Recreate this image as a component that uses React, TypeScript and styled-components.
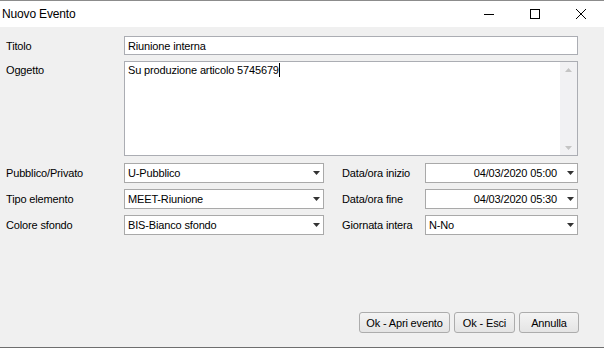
import React from 'react';
import styled, { createGlobalStyle } from 'styled-components';

const Global = createGlobalStyle`
  html, body { margin: 0; padding: 0; background: #f0f0f0; }
  body { font-family: "Liberation Sans", Arial, sans-serif; }
  * { box-sizing: border-box; }
`;

const Window = styled.div`
  width: 604px;
  height: 348px;
  border-top: 1px solid #8c8c8c;
  border-bottom: 1px solid #6e6e6e;
  display: flex;
  flex-direction: column;
  background: #f0f0f0;
`;

const TitleBar = styled.div`
  height: 26px;
  background: #ffffff;
  display: flex;
  align-items: center;
`;

const Title = styled.div`
  flex: 1;
  padding-left: 2px;
  font-size: 12px;
  letter-spacing: -0.15px;
  color: #000;
`;

const CaptionButton = styled.div`
  width: 46px;
  height: 26px;
  display: flex;
  align-items: center;
  justify-content: center;
`;

const Content = styled.div`
  flex: 1;
  display: flex;
  flex-direction: column;
  padding: 9px 26px 14px 6px;
  font-size: 11px;
  letter-spacing: -0.15px;
  color: #000;
`;

const Row = styled.div<{ $h: number; $top?: boolean }>`
  display: grid;
  grid-template-columns: 118px 1fr;
  height: ${(p) => p.$h}px;
  align-items: ${(p) => (p.$top ? 'start' : 'center')};
  margin-bottom: 6px;
`;

const Label = styled.div<{ $pad?: number }>`
  line-height: 14px;
  padding-top: ${(p) => p.$pad ?? 0}px;
  white-space: nowrap;
`;

const TextInput = styled.div`
  height: 19px;
  border: 1px solid #abadb3;
  background: #fff;
  padding-left: 3px;
  display: flex;
  align-items: center;
  line-height: 14px;
`;

const TextArea = styled.div`
  height: 95px;
  border: 1px solid #abadb3;
  background: #fff;
  display: flex;
`;

const TextPane = styled.div`
  flex: 1;
  padding: 1px 3px;
  line-height: 14px;
`;

const Caret = styled.span`
  display: inline-block;
  width: 1px;
  height: 14px;
  background: #000;
  vertical-align: top;
`;

const ScrollTrack = styled.div`
  width: 17px;
  background: #f1f1f3;
  display: flex;
  flex-direction: column;
  justify-content: space-between;
  align-items: center;
  padding: 6px 0 5px;
`;

const Grid = styled.div`
  display: grid;
  grid-template-columns: 118px 200px 101px 1fr;
  grid-auto-rows: 20px;
  row-gap: 6px;
  align-items: center;
  margin-top: 1px;
`;

const RightLabel = styled(Label)`
  padding-left: 18px;
`;

const Combo = styled.div`
  height: 20px;
  border: 1px solid #a9a9a9;
  background: #fff;
  display: flex;
  align-items: center;
  padding-left: 3px;
`;

const ComboValue = styled.div<{ $right?: boolean }>`
  flex: 1;
  line-height: 14px;
  text-align: ${(p) => (p.$right ? 'right' : 'left')};
  padding-right: 6px;
  white-space: nowrap;
`;

const ArrowBox = styled.div`
  width: 14px;
  display: flex;
  justify-content: center;
  align-items: center;
`;

const Spacer = styled.div`
  flex: 1;
`;

const ButtonBar = styled.div`
  display: flex;
  justify-content: flex-end;
  gap: 4px;
  margin-right: -1px;
`;

const Button = styled.div<{ $w: number }>`
  width: ${(p) => p.$w}px;
  height: 21px;
  border: 1px solid #acacac;
  border-radius: 3px;
  background: linear-gradient(#f4f4f4, #e4e4e4);
  display: flex;
  align-items: center;
  justify-content: center;
  font-size: 11px;
  white-space: nowrap;
`;

const Triangle = ({ color = '#333333', up = false }: { color?: string; up?: boolean }) => (
  <svg width="7" height="4" viewBox="0 0 7 4">
    <polygon points={up ? '0,4 7,4 3.5,0' : '0,0 7,0 3.5,4'} fill={color} />
  </svg>
);

const ComboBox = ({ value, right }: { value: string; right?: boolean }) => (
  <Combo>
    <ComboValue $right={right}>{value}</ComboValue>
    <ArrowBox>
      <Triangle />
    </ArrowBox>
  </Combo>
);

export default function App() {
  return (
    <>
      <Global />
      <Window>
        <TitleBar>
          <Title>Nuovo Evento</Title>
          <CaptionButton>
            <svg width="10" height="10" viewBox="0 0 10 10">
              <line x1="0" y1="5.5" x2="10" y2="5.5" stroke="#000" strokeWidth="1" />
            </svg>
          </CaptionButton>
          <CaptionButton>
            <svg width="10" height="10" viewBox="0 0 10 10">
              <rect x="0.5" y="0.5" width="9" height="9" fill="none" stroke="#000" strokeWidth="1" />
            </svg>
          </CaptionButton>
          <CaptionButton>
            <svg width="10" height="10" viewBox="0 0 10 10">
              <line x1="0" y1="0" x2="10" y2="10" stroke="#000" strokeWidth="1" />
              <line x1="10" y1="0" x2="0" y2="10" stroke="#000" strokeWidth="1" />
            </svg>
          </CaptionButton>
        </TitleBar>
        <Content>
          <Row $h={19}>
            <Label>Titolo</Label>
            <TextInput>Riunione interna</TextInput>
          </Row>
          <Row $h={95} $top>
            <Label $pad={2}>Oggetto</Label>
            <TextArea>
              <TextPane>
                Su produzione articolo 5745679
                <Caret />
              </TextPane>
              <ScrollTrack>
                <Triangle color="#c4c4c4" up />
                <Triangle color="#c4c4c4" />
              </ScrollTrack>
            </TextArea>
          </Row>
          <Grid>
            <Label>Pubblico/Privato</Label>
            <ComboBox value="U-Pubblico" />
            <RightLabel>Data/ora inizio</RightLabel>
            <ComboBox value="04/03/2020 05:00" right />
            <Label>Tipo elemento</Label>
            <ComboBox value="MEET-Riunione" />
            <RightLabel>Data/ora fine</RightLabel>
            <ComboBox value="04/03/2020 05:30" right />
            <Label>Colore sfondo</Label>
            <ComboBox value="BIS-Bianco sfondo" />
            <RightLabel>Giornata intera</RightLabel>
            <ComboBox value="N-No" />
          </Grid>
          <Spacer />
          <ButtonBar>
            <Button $w={91}>Ok - Apri evento</Button>
            <Button $w={61}>Ok - Esci</Button>
            <Button $w={60}>Annulla</Button>
          </ButtonBar>
        </Content>
      </Window>
    </>
  );
}
